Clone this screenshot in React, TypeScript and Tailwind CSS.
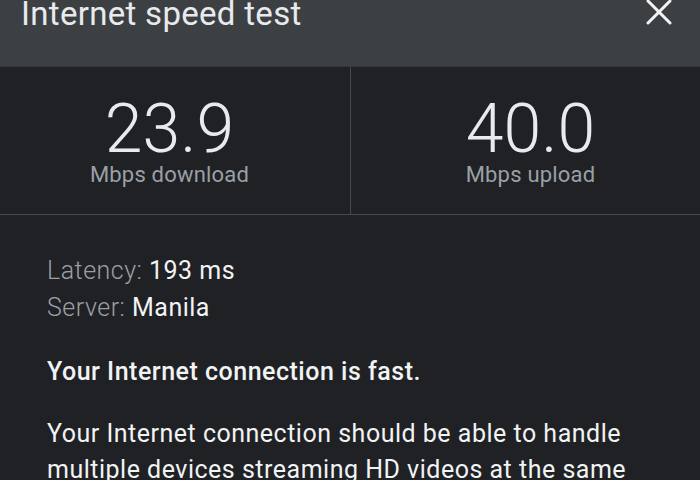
import React from "react";

const Stat = ({ value, label, className }: { value: string; label: string; className: string }) => (
	<div className={`flex flex-col items-center pt-[28px] pb-[27px] ${className}`}>
		<div className="text-[68px] leading-none font-light text-[#e8eaed]">{value}</div>
		<div className="text-[22px] leading-[24px] tracking-[0.2px] text-[#9aa0a6]">{label}</div>
	</div>
);

const App = () => {
	return (
		<div className="w-[700px] h-[480px] overflow-hidden bg-[#202124] font-['Roboto',sans-serif]">
			<header className="h-[67px] bg-[#3c4043] flex items-start justify-between pl-[21px] pr-[28px] border-b border-[#35383b]">
				<h1 className="text-[33px] leading-[28px] tracking-[0.3px] text-[#e8eaed]">Internet speed test</h1>
				<svg width="26" height="26" viewBox="0 0 26 26" className="-mt-[1px]">
					<path d="M2 2 L24 24 M24 2 L2 24" stroke="#f1f3f4" strokeWidth="3" strokeLinecap="round" />
				</svg>
			</header>

			<div className="grid grid-cols-[351px_1fr] border-b border-[#45484c]">
				<Stat value="23.9" label="Mbps download" className="pr-[11px] border-r border-[#45484c]" />
				<Stat value="40.0" label="Mbps upload" className="pl-[10px]" />
			</div>

			<div className="pl-[47px] pr-[40px] pt-[37px] text-[25px] tracking-[0.5px]">
				<div className="leading-[37px]">
					<p>
						<span className="font-light text-[#9aa0a6]">Latency: </span>
						<span className="text-[#f1f3f4]">193 ms</span>
					</p>
					<p>
						<span className="font-light text-[#9aa0a6]">Server: </span>
						<span className="text-[#f1f3f4]">Manila</span>
					</p>
				</div>
				<p className="mt-[27px] leading-[37px] font-medium text-[#f1f3f4]">
					Your Internet connection is fast.
				</p>
				<p className="mt-[26px] leading-[36px] text-[#f1f3f4]">
					Your Internet connection should be able to handle multiple devices streaming HD videos at the same
					time.
				</p>
			</div>
		</div>
	);
};

export default App;
